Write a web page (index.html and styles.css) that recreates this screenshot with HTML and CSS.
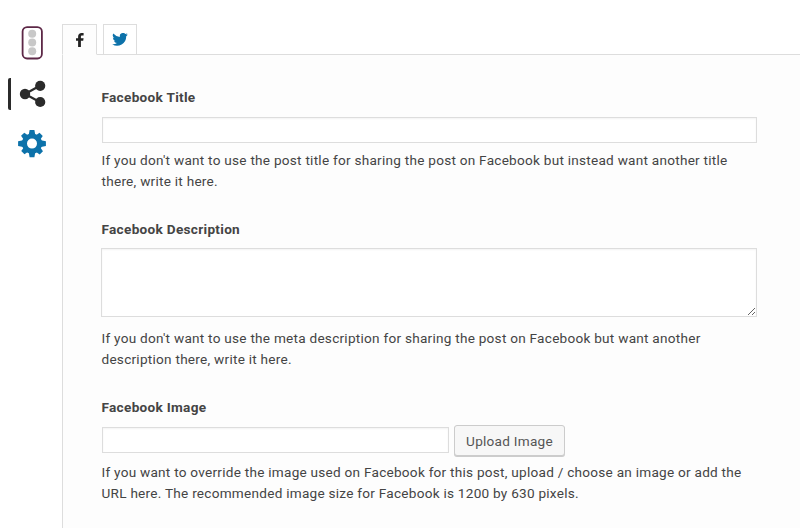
FILE: index.html
```html
<!DOCTYPE html>
<html lang="en">
<head>
<meta charset="utf-8">
<title>Social settings</title>
<link rel="stylesheet" href="styles.css">
</head>
<body>
<div class="metabox">
  <nav class="sidebar">
    <a class="side-item"><svg width="22" height="34" viewBox="0 0 22 34"><rect x="1.6" y="1.1" width="19.3" height="31.4" rx="4.5" fill="#fff" stroke="#5d2847" stroke-width="1.8"/><g fill="#c8c8c8"><circle cx="11.200" cy="7.800" r="4"/><circle cx="11.200" cy="16.500" r="4"/><circle cx="11.200" cy="25.200" r="4"/></g></svg></a>
    <a class="side-item side-item-active"><svg width="28" height="28" viewBox="0 0 28 28"><path d="M20.8 5.8 6 14l14.8 8" fill="none" stroke="#2b2b2b" stroke-width="2.2"/><g fill="#2b2b2b"><circle cx="6" cy="14" r="5.2"/><circle cx="21.2" cy="5.8" r="5.1"/><circle cx="21.2" cy="22" r="5.1"/></g></svg></a>
    <a class="side-item"><svg width="28" height="28" viewBox="-14 -13.6 28 28"><g fill="#0d72aa"><g id="teeth"><path d="M-2.4-13.6h4.8l.9 5h-6.6zM-2.4 13.6h4.8l.9-5h-6.6z"/><path d="M-13.900-2.4v4.8l5 .9v-6.6zM13.900-2.4v4.8l-5 .9v-6.6z"/></g><use href="#teeth" transform="rotate(45) scale(.95)"/></g><circle r="7.6" fill="none" stroke="#0d72aa" stroke-width="5.2"/></svg></a>
  </nav>
  <main class="content">
    <div class="tabs">
      <a class="tab tab-active"><svg width="8" height="14" viewBox="0 0 8 14"><path d="M2.1 14V7.8H0V5.3h2.1V3.6C2.1 1.3 3.5 0 5.6 0c.9 0 1.7.1 2 .1v2.4H6.2c-1 0-1.3.5-1.3 1.3v1.5h2.7l-.4 2.5H4.9V14z" fill="#222"/></svg></a>
      <a class="tab tab-twitter"><svg width="16" height="13" viewBox="0 0 24 20"><path d="M24 2.4a10 10 0 0 1-2.8.8A5 5 0 0 0 23.300.4a10 10 0 0 1-3.100 1.200A4.900 4.900 0 0 0 11.800 6 14 14 0 0 1 1.700.9a4.900 4.900 0 0 0 1.500 6.600A5 5 0 0 1 1 6.900a4.900 4.900 0 0 0 3.900 4.900 5 5 0 0 1-2.200.1 4.900 4.900 0 0 0 4.600 3.400A9.900 9.900 0 0 1 0 17.300 14 14 0 0 0 21.500 4.900 10 10 0 0 0 24 2.400z" fill="#0d72aa"/></svg></a>
    </div>
    <form class="panel">
      <label class="label" for="title">Facebook Title</label>
      <input class="text title-input" id="title" type="text">
      <p class="help">If you don't want to use the post title for sharing the post on Facebook but instead want another title there, write it here.</p>
      <label class="label" for="description">Facebook Description</label>
      <textarea class="text area" id="description"></textarea>
      <p class="help help-area">If you don't want to use the meta description for sharing the post on Facebook but want another description there, write it here.</p>
      <label class="label" for="image">Facebook Image</label>
      <div class="upload"><input class="text image-input" id="image" type="text"><button class="button" type="button">Upload Image</button></div>
      <p class="help">If you want to override the image used on Facebook for this post, upload / choose an image or add the URL here. The recommended image size for Facebook is 1200 by 630 pixels.</p>
    </form>
  </main>
</div>
</body>
</html>
```
FILE: styles.css
```css
* { box-sizing: border-box; }
body {
  margin: 0;
  background: #fff;
  color: #444;
  font: 13.6px/21px Roboto, sans-serif;
  letter-spacing: .25px;
  overflow: hidden;
}
.metabox { display: flex; height: 528px; padding-top: 24px; }
.sidebar { width: 62px; flex: none; display: flex; flex-direction: column; padding-left: 8px; }
.side-item { display: flex; align-items: center; justify-content: center; width: 48px; height: 37px; }
.side-item svg { display: block; }
.side-item-active {
  height: 32px;
  margin: 17px 0 15px;
  padding-right: 1px;
  border-left: 3px solid #2b2b2b;
  border-radius: 2px;
}
.content { flex: 1; display: flex; flex-direction: column; }
.tabs { display: flex; gap: 6px; height: 31px; position: relative; }
.tab {
  display: flex;
  align-items: center;
  justify-content: center;
  width: 35px;
  height: 31px;
  border: 1px solid #ddd;
  background: #fff;
}
.tab-twitter { width: 34px; }
.tab-active { border-bottom-color: #fdfdfd; background: #fdfdfd; }
.tabs::after { content: ""; flex: 1; margin-left: -6px; border-bottom: 1px solid #ddd; }
.tabs::before { content: ""; position: absolute; left: 35px; bottom: 0; width: 6px; border-bottom: 1px solid #ddd; }
.panel { flex: 1; padding: 32px 43px 0 38px; border-left: 1px solid #ddd; background: #fdfdfd; }
.label { display: block; padding-left: .5px; font-weight: 700; letter-spacing: .3px; }
.text { display: block; margin: 0; padding: 3px 5px; border: 1px solid #ddd; border-radius: 0; background: #fff; outline: 0; font: inherit; box-shadow: inset 0 1px 2px rgba(0, 0, 0, .05); }
.title-input { width: 655px; height: 26px; margin: 9px 0 0 1px; }
.area { width: 656px; height: 69px; margin-top: 8px; resize: vertical; }
.help { width: 656px; margin: 7px 0 27px; padding-left: .5px; }
.help-area { margin: 11px 0 27px; }
.upload { display: flex; align-items: flex-start; gap: 5px; margin: 7px 0 -1px 1px; }
.image-input { width: 347px; height: 26px; margin-top: 2px; }
.button { width: 111px; height: 31px; padding: 0; border: 1px solid #ccc; border-radius: 3px; background: #f7f7f7; box-shadow: 0 1px 0 #ccc; color: #555; font: 13.6px/28px Roboto, sans-serif; letter-spacing: .25px; }
```
